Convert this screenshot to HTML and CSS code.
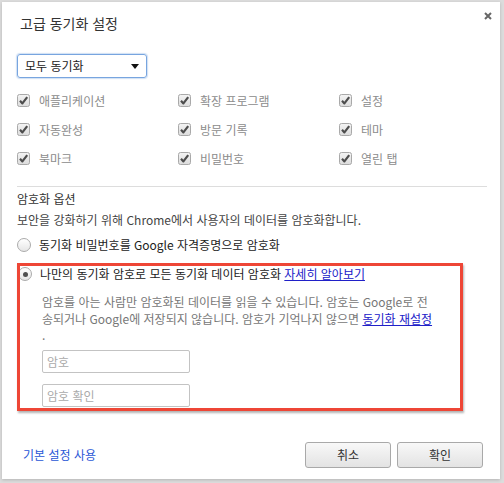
FILE: index.html
```html
<!DOCTYPE html>
<html lang="ko">
<head>
<meta charset="utf-8">
<title>고급 동기화 설정</title>
<link rel="stylesheet" href="styles.css">
</head>
<body>
<div class="dialog">
  <h1 class="title">고급 동기화 설정</h1>
  <svg class="close" width="8" height="8" viewBox="0 0 8 8"><path d="M1 1L7 7M7 1L1 7" stroke="#666" stroke-width="2"/></svg>

  <div class="select"><span>모두 동기화</span><span class="tri"></span></div>

  <div class="grid">
    <label class="item"><svg class="cb" width="13" height="13" viewBox="0 0 13 13"><defs><linearGradient id="g" x1="0" y1="0" x2="0" y2="1"><stop offset="0" stop-color="#f4f4f4"/><stop offset="1" stop-color="#dcdcdc"/></linearGradient></defs><rect x="0.5" y="0.5" width="12" height="12" rx="2" fill="url(#g)" stroke="#a9a9a9"/><path d="M3 6.8L5.4 9.4L10.2 3.2" fill="none" stroke="#4d4d4d" stroke-width="2.2" stroke-linejoin="round"/></svg><span>애플리케이션</span></label>
    <label class="item"><svg class="cb" width="13" height="13" viewBox="0 0 13 13"><rect x="0.5" y="0.5" width="12" height="12" rx="2" fill="url(#g)" stroke="#a9a9a9"/><path d="M3 6.8L5.4 9.4L10.2 3.2" fill="none" stroke="#4d4d4d" stroke-width="2.2" stroke-linejoin="round"/></svg><span>확장 프로그램</span></label>
    <label class="item"><svg class="cb" width="13" height="13" viewBox="0 0 13 13"><rect x="0.5" y="0.5" width="12" height="12" rx="2" fill="url(#g)" stroke="#a9a9a9"/><path d="M3 6.8L5.4 9.4L10.2 3.2" fill="none" stroke="#4d4d4d" stroke-width="2.2" stroke-linejoin="round"/></svg><span>설정</span></label>
    <label class="item"><svg class="cb" width="13" height="13" viewBox="0 0 13 13"><rect x="0.5" y="0.5" width="12" height="12" rx="2" fill="url(#g)" stroke="#a9a9a9"/><path d="M3 6.8L5.4 9.4L10.2 3.2" fill="none" stroke="#4d4d4d" stroke-width="2.2" stroke-linejoin="round"/></svg><span>자동완성</span></label>
    <label class="item"><svg class="cb" width="13" height="13" viewBox="0 0 13 13"><rect x="0.5" y="0.5" width="12" height="12" rx="2" fill="url(#g)" stroke="#a9a9a9"/><path d="M3 6.8L5.4 9.4L10.2 3.2" fill="none" stroke="#4d4d4d" stroke-width="2.2" stroke-linejoin="round"/></svg><span>방문 기록</span></label>
    <label class="item"><svg class="cb" width="13" height="13" viewBox="0 0 13 13"><rect x="0.5" y="0.5" width="12" height="12" rx="2" fill="url(#g)" stroke="#a9a9a9"/><path d="M3 6.8L5.4 9.4L10.2 3.2" fill="none" stroke="#4d4d4d" stroke-width="2.2" stroke-linejoin="round"/></svg><span>테마</span></label>
    <label class="item"><svg class="cb" width="13" height="13" viewBox="0 0 13 13"><rect x="0.5" y="0.5" width="12" height="12" rx="2" fill="url(#g)" stroke="#a9a9a9"/><path d="M3 6.8L5.4 9.4L10.2 3.2" fill="none" stroke="#4d4d4d" stroke-width="2.2" stroke-linejoin="round"/></svg><span>북마크</span></label>
    <label class="item"><svg class="cb" width="13" height="13" viewBox="0 0 13 13"><rect x="0.5" y="0.5" width="12" height="12" rx="2" fill="url(#g)" stroke="#a9a9a9"/><path d="M3 6.8L5.4 9.4L10.2 3.2" fill="none" stroke="#4d4d4d" stroke-width="2.2" stroke-linejoin="round"/></svg><span>비밀번호</span></label>
    <label class="item"><svg class="cb" width="13" height="13" viewBox="0 0 13 13"><rect x="0.5" y="0.5" width="12" height="12" rx="2" fill="url(#g)" stroke="#a9a9a9"/><path d="M3 6.8L5.4 9.4L10.2 3.2" fill="none" stroke="#4d4d4d" stroke-width="2.2" stroke-linejoin="round"/></svg><span>열린 탭</span></label>
  </div>

  <hr class="divider">

  <div class="heading">암호화 옵션</div>
  <div class="desc">보안을 강화하기 위해 Chrome에서 사용자의 데이터를 암호화합니다.</div>

  <div class="radio-row r1"><span class="radio"></span><span>동기화 비밀번호를 Google 자격증명으로 암호화</span></div>

  <div class="radio-row r2"><span class="radio checked"></span><span>나만의 동기화 암호로 모든 동기화 데이터 암호화 <a class="link" href="#">자세히 알아보기</a></span></div>

  <div class="pass">
    <p class="para">암호를 아는 사람만 암호화된 데이터를 읽을 수 있습니다. 암호는 Google로 전<br>송되거나 Google에 저장되지 않습니다. 암호가 기억나지 않으면 <a class="link" href="#">동기화 재설정</a><br>.</p>
    <div class="input">암호</div>
    <div class="input second">암호 확인</div>
  </div>

  <div class="highlight"></div>

  <div class="footer">
    <a class="reset" href="#">기본 설정 사용</a>
    <div class="buttons">
      <button class="btn">취소</button>
      <button class="btn">확인</button>
    </div>
  </div>
</div>
</body>
</html>
```

FILE: styles.css
```css
html, body {
  margin: 0;
  padding: 0;
}
body {
  background: #dcdcdc;
  font-family: "Noto Sans CJK KR", "Noto Sans", sans-serif;
  font-size: 12px;
  color: #333;
  width: 504px;
  height: 483px;
  overflow: hidden;
}
.dialog {
  position: relative;
  margin: 2px 4px 0 2px;
  height: 477px;
  background: #fff;
  padding: 0 15px;
  box-sizing: border-box;
  box-shadow: 0 1px 3px rgba(0,0,0,0.18);
}
.title {
  margin: 0;
  padding: 12px 0 0 3px;
  font-size: 14px;
  font-weight: normal;
  line-height: 18px;
  color: #333;
}
.close {
  position: absolute;
  top: 10px;
  right: 8px;
}
.select {
  margin-top: 22px;
  width: 130px;
  height: 24px;
  box-sizing: border-box;
  border: 1px solid #78a5df;
  border-radius: 3px;
  box-shadow: 0 0 1px 1px rgba(120,165,223,0.35);
  display: flex;
  align-items: center;
  justify-content: space-between;
  padding: 0 7px 0 7px;
  color: #222;
  line-height: 18px;
}
.tri {
  width: 0;
  height: 0;
  border-left: 4px solid transparent;
  border-right: 4px solid transparent;
  border-top: 5px solid #111;
}
.grid {
  margin-top: 8px;
  display: grid;
  grid-template-columns: 161px 161px 1fr;
  grid-auto-rows: 29px;
}
.item {
  display: flex;
  align-items: center;
  color: #8c8c8c;
  line-height: 18px;
}
.cb {
  margin-right: 9px;
  flex: none;
}
.divider {
  margin: 13px -2px 0 0;
  border: 0;
  border-top: 1px solid #dddddd;
  height: 0;
}
.heading {
  margin-top: 3px;
  line-height: 18px;
  color: #333;
}
.desc {
  margin-top: 3px;
  line-height: 18px;
  color: #444;
}
.radio-row {
  display: flex;
  align-items: center;
  line-height: 18px;
  color: #222;
}
.r1 { margin-top: 7px; }
.r2 { margin-top: 11px; padding-left: 1px; }
.radio {
  width: 14px;
  height: 14px;
  box-sizing: border-box;
  border: 1px solid #ababab;
  border-radius: 50%;
  background: linear-gradient(#ffffff, #e6e6e6);
  margin-right: 8px;
  flex: none;
  position: relative;
}
.radio.checked::after {
  content: "";
  position: absolute;
  left: 3.5px;
  top: 3.5px;
  width: 5px;
  height: 5px;
  border-radius: 50%;
  background: #505050;
}
.link {
  color: #2020c8;
  text-decoration: underline;
}
.pass {
  padding-left: 25px;
}
.para {
  margin: 11px 0 0 0;
  line-height: 16.5px;
  color: #777;
  white-space: nowrap;
}
.input {
  margin-top: 6px;
  width: 148px;
  height: 23px;
  box-sizing: border-box;
  border: 1px solid #c3c3c3;
  border-radius: 2px;
  padding-left: 4px;
  line-height: 21px;
  color: #aaa;
}
.input.second {
  margin-top: 11px;
}
.highlight {
  position: absolute;
  left: 15px;
  top: 261px;
  width: 446px;
  height: 148px;
  box-sizing: border-box;
  border: 3px solid #ee4636;
  box-shadow: 1px 2px 2px rgba(0,0,0,0.3);
  pointer-events: none;
}
.footer {
  margin-top: 35px;
  display: flex;
  align-items: center;
  justify-content: space-between;
  padding-left: 6px;
  margin-right: 2px;
}
.reset {
  color: #2a57d6;
  text-decoration: none;
  line-height: 18px;
}
.buttons {
  display: flex;
  gap: 6px;
}
.btn {
  width: 86px;
  height: 26px;
  box-sizing: border-box;
  border: 1px solid #a9a9a9;
  border-radius: 3px;
  background: linear-gradient(#f8f8f8, #e3e3e3);
  font-family: "Noto Sans CJK KR", "Noto Sans", sans-serif;
  font-size: 12px;
  color: #333;
  padding: 0;
  line-height: 22px;
}
```
